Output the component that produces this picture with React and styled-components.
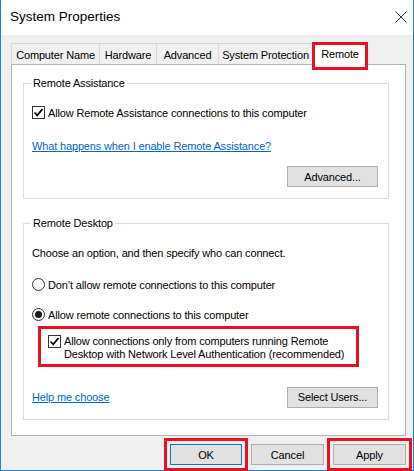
import styled, { createGlobalStyle } from 'styled-components'

const GlobalStyle = createGlobalStyle`
  html, body {
    margin: 0;
    padding: 0;
    background: #ffffff;
  }
  * {
    box-sizing: border-box;
  }
`

const Window = styled.div`
  width: 414px;
  height: 471px;
  border: 1px solid #1883d7;
  border-top: none;
  background: #f0f0f0;
  display: flex;
  flex-direction: column;
  font-family: 'Liberation Sans', Arial, sans-serif;
  font-size: 11px;
  letter-spacing: -0.15px;
  color: #000;
`

const TitleBar = styled.div`
  height: 35px;
  background: #ffffff;
  display: flex;
  align-items: center;
  justify-content: space-between;
  padding: 0 3px 3px 9px;
`

const Title = styled.span`
  font-size: 13.5px;
  letter-spacing: 0;
  color: #000;
`

const CloseIcon = styled.svg`
  width: 12px;
  height: 12px;
  margin-right: 3px;
  margin-bottom: -2px;
`

const Content = styled.div`
  flex: 1;
  display: flex;
  flex-direction: column;
  padding: 7px 7px 5px 10px;
`

const TabRow = styled.div`
  display: flex;
  align-items: flex-end;
  height: 22px;
  padding-left: 1px;
  position: relative;
  z-index: 1;
`

const Tab = styled.div`
  height: 21px;
  width: ${({ $width }) => $width}px;
  display: flex;
  align-items: center;
  justify-content: center;
  padding-top: 1px;
  background: #f0f0f0;
  border: 1px solid #d9d9d9;
  border-bottom: none;
  margin-left: -1px;
  white-space: nowrap;
`

const ActiveTab = styled.div`
  height: 28px;
  width: 56px;
  margin-bottom: -6px;
  margin-left: -1px;
  display: flex;
  justify-content: center;
  padding-top: 3px;
  background: #ffffff;
  border: 3px solid #e81123;
  white-space: nowrap;
`

const Panel = styled.div`
  height: 372px;
  width: 395px;
  background: #ffffff;
  border: 1px solid #b4b4b4;
  padding: 18px 16px 0 11px;
  display: flex;
  flex-direction: column;
  gap: 24px;
`

const Group = styled.div`
  position: relative;
  border: 1px solid #dcdcdc;
  padding: 21px 10px 11px 8px;
  display: flex;
  flex-direction: column;
`

const GroupTitle = styled.span`
  position: absolute;
  top: -8px;
  left: 7px;
  padding: 0 2px;
  background: #ffffff;
  line-height: 15px;
`

const Row = styled.div`
  display: flex;
  align-items: center;
  gap: 3px;
  height: 15px;
  white-space: nowrap;
  margin-top: ${({ $gap }) => $gap || 0}px;
`

const Box = styled.span`
  width: 13px;
  height: 13px;
  flex: none;
  border: 1px solid #333333;
  background: #ffffff;
  display: flex;
  align-items: center;
  justify-content: center;
`

const Radio = styled.span`
  width: 13px;
  height: 13px;
  flex: none;
  border: 1px solid #333333;
  border-radius: 50%;
  background: #ffffff;
  display: flex;
  align-items: center;
  justify-content: center;

  &::after {
    content: '';
    width: 7px;
    height: 7px;
    border-radius: 50%;
    background: #1a1a1a;
    display: ${({ $checked }) => ($checked ? 'block' : 'none')};
  }
`

const Link = styled.a`
  color: #0066cc;
  text-decoration: underline;
  line-height: 15px;
  cursor: pointer;
`

const ButtonRow = styled.div`
  display: flex;
  align-items: center;
  justify-content: ${({ $split }) => ($split ? 'space-between' : 'flex-end')};
  margin-top: ${({ $gap }) => $gap || 0}px;
`

const Button = styled.button`
  font-family: inherit;
  font-size: 11px;
  letter-spacing: -0.15px;
  color: #000;
  width: ${({ $width }) => $width || 91}px;
  height: 21px;
  padding: 0;
  background: #e1e1e1;
  border: 1px solid ${({ $focused }) => ($focused ? '#0078d7' : '#adadad')};
  outline: ${({ $marked }) => ($marked ? '3px solid #e81123' : 'none')};
  outline-offset: 3px;
`

const Highlight = styled.div`
  margin: 4px 0 0 6px;
  width: 321px;
  border: 3px solid #e81123;
  padding: 6px 8px 3px 7px;
  display: flex;
  align-items: flex-start;
  gap: 3px;
  white-space: nowrap;
`

const HighlightText = styled.span`
  line-height: 13px;
  margin-top: -0.5px;
`

const Footer = styled.div`
  display: flex;
  justify-content: flex-end;
  gap: 9px;
  margin-top: 8px;
`

const Check = () => (
  <svg width='11' height='11' viewBox='0 0 11 11'>
    <path d='M1.5 5.5 L4.2 8.3 L9.5 2' fill='none' stroke='#000' strokeWidth='1.8' />
  </svg>
)

export default function App() {
  return (
    <>
      <GlobalStyle />
      <Window>
        <TitleBar>
          <Title>System Properties</Title>
          <CloseIcon viewBox='0 0 12 12'>
            <path d='M0.5 0.5 L11.5 11.5 M11.5 0.5 L0.5 11.5' stroke='#333' strokeWidth='1' />
          </CloseIcon>
        </TitleBar>
        <Content>
          <TabRow>
            <Tab $width={89}>Computer Name</Tab>
            <Tab $width={58}>Hardware</Tab>
            <Tab $width={63}>Advanced</Tab>
            <Tab $width={95}>System Protection</Tab>
            <ActiveTab>Remote</ActiveTab>
          </TabRow>
          <Panel>
            <Group>
              <GroupTitle>Remote Assistance</GroupTitle>
              <Row>
                <Box>
                  <Check />
                </Box>
                Allow Remote Assistance connections to this computer
              </Row>
              <Row $gap={19}>
                <Link>What happens when I enable Remote Assistance?</Link>
              </Row>
              <ButtonRow $gap={12}>
                <Button>Advanced...</Button>
              </ButtonRow>
            </Group>
            <Group>
              <GroupTitle>Remote Desktop</GroupTitle>
              <Row>Choose an option, and then specify who can connect.</Row>
              <Row $gap={17}>
                <Radio />
                Don’t allow remote connections to this computer
              </Row>
              <Row $gap={15}>
                <Radio $checked />
                Allow remote connections to this computer
              </Row>
              <Highlight>
                <Box>
                  <Check />
                </Box>
                <HighlightText>
                  Allow connections only from computers running Remote
                  <br />
                  Desktop with Network Level Authentication (recommended)
                </HighlightText>
              </Highlight>
              <ButtonRow $split $gap={20}>
                <Link>Help me choose</Link>
                <Button>Select Users...</Button>
              </ButtonRow>
            </Group>
          </Panel>
          <Footer>
            <Button $width={72} $focused $marked>
              OK
            </Button>
            <Button $width={73}>Cancel</Button>
            <Button $width={73} $marked>
              Apply
            </Button>
          </Footer>
        </Content>
      </Window>
    </>
  )
}
